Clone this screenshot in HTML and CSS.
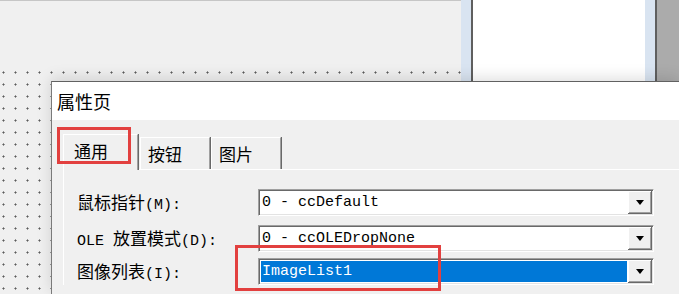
FILE: index.html
```html
<!DOCTYPE html>
<html lang="zh-CN">
<head>
<meta charset="utf-8">
<title>属性页</title>
<link rel="stylesheet" href="styles.css">
</head>
<body>
<div class="workspace">
  <div class="designer">
    <div class="caption"></div>
    <div class="grid"></div>
  </div>
  <div class="split"></div>
  <div class="pane"></div>
  <div class="split"></div>
  <div class="dock"></div>
</div>

<div class="dialog">
  <div class="titlebar">属性页</div>
  <div class="dlg-body">
    <div class="tabs">
      <div class="tab tab-active">通用</div>
      <div class="tab">按钮</div>
      <div class="tab">图片</div>
    </div>
    <div class="panel">
      <div class="row row-1">
        <div class="label">鼠标指针<span class="lat">(M):</span></div>
        <div class="combo">
          <div class="value">0 - ccDefault</div>
          <div class="btn"><span class="arrow"></span></div>
        </div>
      </div>
      <div class="row row-2">
        <div class="label"><span class="lat">OLE </span>放置模式<span class="lat">(D):</span></div>
        <div class="combo">
          <div class="value">0 - ccOLEDropNone</div>
          <div class="btn"><span class="arrow"></span></div>
        </div>
      </div>
      <div class="row row-3">
        <div class="label">图像列表<span class="lat">(I):</span></div>
        <div class="combo">
          <div class="value value-sel"><span class="sel">ImageList1</span></div>
          <div class="btn"><span class="arrow"></span></div>
        </div>
      </div>
    </div>
  </div>
</div>

<div class="mark mark-tab"></div>
<div class="mark mark-combo"></div>
</body>
</html>
```
FILE: styles.css
```css
html, body {
  margin: 0;
  padding: 0;
}
body {
  width: 679px;
  height: 294px;
  overflow: hidden;
  position: relative;
  background: #f0f0f0;
  font-family: "Noto Sans CJK SC", "Noto Sans", sans-serif;
  color: #000;
}

/* background IDE workspace */
.workspace {
  display: flex;
  height: 294px;
}
.designer {
  width: 461px;
  display: flex;
  flex-direction: column;
  border-top: 1px solid #c6c6c6;
  box-sizing: border-box;
}
.caption {
  height: 65px;
}
.grid {
  flex: 1;
  background-image: radial-gradient(circle at 3.5px 6.5px, #5c5c5c 0.8px, rgba(0,0,0,0) 1.3px);
  background-size: 12px 12px;
}
.split {
  width: 10px;
  background: #d9e4f1;
  border-right: 2px solid #5f5f5f;
}
.pane {
  width: 172px;
  background: #fff;
}
.dock {
  flex: 1;
  background: #ababab;
}

/* dialog window over the workspace */
.dialog {
  position: absolute;
  left: 51px;
  top: 81px;
  right: 0;
  bottom: 0;
  background: #f0f0f0;
  border-top: 1px solid #616161;
  border-left: 1px solid #7a7a7a;
  box-shadow: 0 -3px 14px rgba(0,0,0,0.13);
}
.titlebar {
  height: 38px;
  background: #fff;
  display: flex;
  align-items: center;
  padding-left: 5px;
  font-size: 18px;
  line-height: 1;
}
.dlg-body {
  padding-left: 11px;
}
.tabs {
  display: flex;
  align-items: flex-end;
  height: 35px;
  margin-top: 14px;
  position: relative;
  z-index: 1;
}
.tab {
  box-sizing: border-box;
  width: 70px;
  height: 32px;
  border-top: 1px solid #fff;
  border-left: 1px solid #fff;
  border-right: 1px solid #a0a0a0;
  box-shadow: 1px 0 0 #696969;
  margin-right: 1px;
  display: flex;
  align-items: center;
  padding-left: 7px;
  font-size: 17px;
  line-height: 1;
}
.tab-active {
  width: 75px;
  height: 36px;
  margin-bottom: -1px;
  padding-left: 10px;
  padding-bottom: 4px;
  background: #f0f0f0;
  margin-right: 2px;
}
.panel {
  border-top: 1px solid #fff;
  border-left: 1px solid #fff;
  padding-top: 19px;
  padding-left: 13px;
}
.row {
  display: flex;
  align-items: center;
  height: 27px;
}
.row-2 { margin-top: 9px; }
.row-3 { margin-top: 6px; }
.label {
  width: 181px;
  font-size: 17px;
  line-height: 1;
  white-space: nowrap;
}
.lat {
  font-family: "Liberation Mono", monospace;
  font-size: 15px;
}
.combo {
  box-sizing: border-box;
  width: 396px;
  height: 27px;
  display: flex;
  border-top: 1px solid #a0a0a0;
  border-left: 1px solid #a0a0a0;
  border-right: 1px solid #fff;
  border-bottom: 1px solid #fff;
  box-shadow: inset 1px 1px 0 #696969, inset -1px -1px 0 #e3e3e3;
  padding: 1px;
}
.value {
  flex: 1;
  background: #fff;
  display: flex;
  align-items: center;
  padding-left: 2px;
  font-family: "Liberation Mono", monospace;
  font-size: 15px;
  line-height: 1;
  white-space: nowrap;
  overflow: hidden;
}
.value-sel {
  padding: 1px;
  align-items: stretch;
}
.sel {
  flex: 1;
  background: #0078d7;
  color: #fff;
  display: flex;
  align-items: center;
  padding-left: 1px;
}
.btn {
  box-sizing: border-box;
  width: 24px;
  background: #f0f0f0;
  box-shadow: inset -1px -1px 0 #696969, inset 1px 1px 0 #fff, inset -2px -2px 0 #a0a0a0;
  display: flex;
  align-items: center;
  justify-content: center;
}
.arrow {
  width: 0;
  height: 0;
  border-left: 4px solid transparent;
  border-right: 4px solid transparent;
  border-top: 5px solid #000;
}

/* red annotation boxes */
.mark {
  position: absolute;
  box-sizing: border-box;
  border: 3px solid #e2403f;
  z-index: 5;
}
.mark-tab {
  left: 57px;
  top: 127px;
  width: 74px;
  height: 37px;
}
.mark-combo {
  left: 235px;
  top: 245px;
  width: 206px;
  height: 46px;
}
```
